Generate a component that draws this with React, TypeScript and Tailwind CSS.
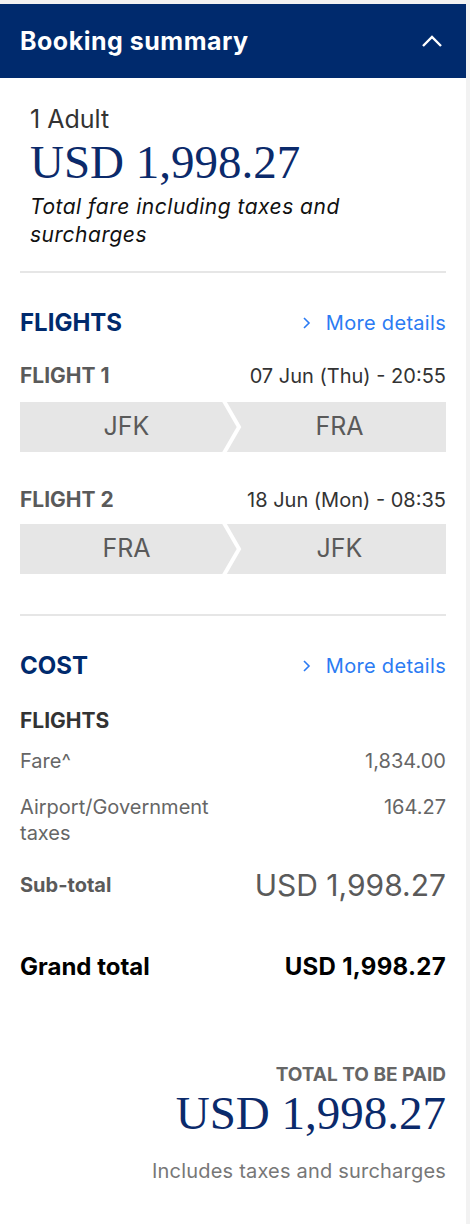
import React from "react";

const sans = { fontFamily: "Inter, 'Open Sans', sans-serif" };

function Chevron() {
  return (
    <svg width="12" height="14" viewBox="0 0 12 14" className="mr-[13px]">
      <polyline points="3,2 8,7 3,12" fill="none" stroke="#2b7bf3" strokeWidth="1.6" />
    </svg>
  );
}

function MoreDetails() {
  return (
    <div className="flex items-center text-[20px] leading-[28px] tracking-[0.3px] text-[#2b7bf3]">
      <Chevron />
      <span>More details</span>
    </div>
  );
}

function RouteBar({ from, to }: { from: string; to: string }) {
  return (
    <div className="relative grid h-[50px] grid-cols-2 bg-[#e6e6e6] text-[25px] text-[#5a5a5a]">
      <div className="flex items-center justify-center">{from}</div>
      <div className="flex items-center justify-center">{to}</div>
      <svg
        className="absolute top-0 left-[calc(50%-12px)]"
        width="24"
        height="50"
        viewBox="0 0 24 50"
      >
        <polyline points="3,-1 18,25 3,51" fill="none" stroke="#ffffff" strokeWidth="4" />
      </svg>
    </div>
  );
}

export default function App() {
  return (
    <div className="min-h-[1224px] bg-[#f2f2f2] pt-1 pr-1" style={sans}>
      <div className="w-[466px] min-h-[1220px] bg-white">
        <div className="flex h-[74px] items-center justify-between bg-[#002a6d] px-5">
          <span className="text-[25px] font-bold leading-[28px] tracking-[0.5px] text-white">
            Booking summary
          </span>
          <svg width="22" height="14" viewBox="0 0 22 14" className="mr-[3px]">
            <polyline points="2,12 11,3 20,12" fill="none" stroke="#ffffff" strokeWidth="2.4" />
          </svg>
        </div>

        <div className="px-5 pb-10">
          <div className="pl-[10px] pt-[27px]">
            <div className="text-[25px] leading-[28px] text-[#333333]">1 Adult</div>
            <div
              className="mt-1 text-[47px] leading-[50px] text-[#0b2a6b]"
              style={{ fontFamily: "'Liberation Serif', serif" }}
            >
              USD 1,998.27
            </div>
            <div className="mt-[6px] text-[21px] italic leading-[28px] tracking-[0.5px] text-[#111111]">
              Total fare including taxes and
              <br />
              surcharges
            </div>
          </div>

          <div className="mt-[22px] h-[2px] bg-[#e6e6e6]" />

          <div className="mt-[36px] flex items-center justify-between">
            <span className="text-[24px] font-bold leading-[28px] text-[#002a6d]">FLIGHTS</span>
            <MoreDetails />
          </div>

          <div className="mt-[25px] flex items-center justify-between leading-[28px]">
            <span className="text-[21px] font-bold text-[#5a5a5a]">FLIGHT 1</span>
            <span className="text-[20px] text-[#333333]">07 Jun (Thu) - 20:55</span>
          </div>
          <div className="mt-[12px]">
            <RouteBar from="JFK" to="FRA" />
          </div>

          <div className="mt-[34px] flex items-center justify-between leading-[28px]">
            <span className="text-[21px] font-bold text-[#5a5a5a]">FLIGHT 2</span>
            <span className="text-[20px] text-[#333333]">18 Jun (Mon) - 08:35</span>
          </div>
          <div className="mt-[10px]">
            <RouteBar from="FRA" to="JFK" />
          </div>

          <div className="mt-[40px] h-[2px] bg-[#e6e6e6]" />

          <div className="mt-[36px] flex items-center justify-between">
            <span className="text-[24px] font-bold leading-[28px] text-[#002a6d]">COST</span>
            <MoreDetails />
          </div>

          <div className="mt-[27px] text-[21px] font-bold leading-[28px] text-[#333333]">FLIGHTS</div>

          <div className="mt-[12px] flex justify-between text-[20px] leading-[28px] text-[#666666]">
            <span>Fare^</span>
            <span>1,834.00</span>
          </div>

          <div className="mt-[19px] flex justify-between text-[20px] leading-[26px] text-[#666666]">
            <span>
              Airport/Government
              <br />
              taxes
            </span>
            <span>164.27</span>
          </div>

          <div className="mt-[21px] flex items-center justify-between">
            <span className="text-[20px] font-bold leading-[28px] text-[#5a5a5a]">Sub-total</span>
            <span className="text-[30px] leading-[36px] text-[#5a5a5a]">USD 1,998.27</span>
          </div>

          <div className="mt-[50px] flex items-center justify-between text-[24px] font-bold leading-[28px] text-black">
            <span>Grand total</span>
            <span className="tracking-[0.3px]">USD 1,998.27</span>
          </div>

          <div className="mt-[82px] text-right text-[19px] font-bold leading-[24px] text-[#666666]">
            TOTAL TO BE PAID
          </div>
          <div
            className="mt-[1px] text-right text-[47px] leading-[50px] text-[#0b2a6b]"
            style={{ fontFamily: "'Liberation Serif', serif" }}
          >
            USD 1,998.27
          </div>
          <div className="mt-[19px] text-right text-[20px] leading-[28px] tracking-[0.2px] text-[#777777]">
            Includes taxes and surcharges
          </div>
        </div>
      </div>
    </div>
  );
}
